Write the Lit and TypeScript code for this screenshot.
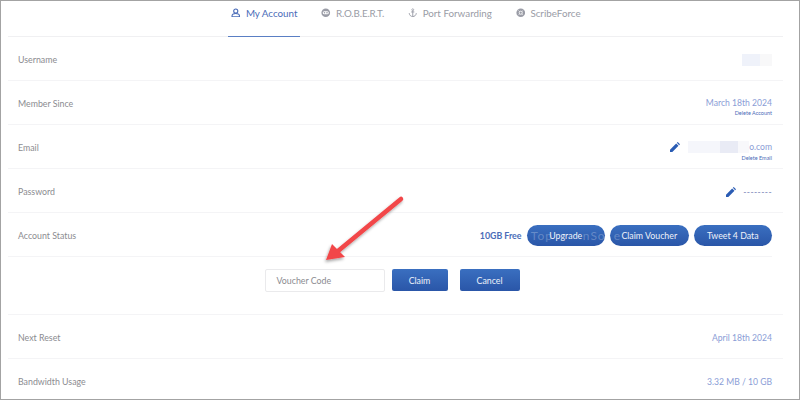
import { LitElement, html, css, svg } from "lit";
import { customElement } from "lit/decorators.js";

const userIcon = svg`<circle cx="6" cy="3.800" r="2.600" fill="none" stroke="currentColor" stroke-width="1.400"/><path d="M1.300 11v-1c0-1.800 1.600-3 4.700-3s4.700 1.200 4.700 3v1z" fill="none" stroke="currentColor" stroke-width="1.400"/>`;
const robotIcon = svg`<circle cx="6" cy="6" r="5.500" fill="currentColor"/><rect x="2.200" y="4.200" width="7.600" height="3.800" rx="1.900" fill="#fff"/><circle cx="4.400" cy="6.100" r="1" fill="currentColor"/><circle cx="7.600" cy="6.100" r="1" fill="currentColor"/>`;
const anchorIcon = svg`<circle cx="6" cy="2.200" r="1.200" fill="none" stroke="currentColor"/><path d="M6 3.400V10.800M4 5h4M1.500 6.500c.3 2.700 2.200 4.300 4.500 4.300s4.200-1.600 4.500-4.300" fill="none" stroke="currentColor" stroke-width="1.200"/>`;
const scribeIcon = svg`<circle cx="6" cy="6" r="5.500" fill="currentColor"/><circle cx="6" cy="6" r="2" fill="none" stroke="#fff" stroke-width="1"/><path d="M3 3l1.800 1.800M9 3L7.200 4.800M3 9l1.800-1.800M9 9L7.200 7.200" stroke="#fff" stroke-width=".7"/>`;
const pencil = svg`<path d="M0 12v-2.800L7.400 1.800l2.800 2.800L2.800 12zM8.200 1l1.100-1 2.700 2.700-1 1.100z" fill="currentColor"/>`;

@customElement("app-root")
export class AppRoot extends LitElement {
  static styles = css`
    :host {
      display: block;
      position: relative;
      width: 800px;
      height: 400px;
      box-sizing: border-box;
      overflow: hidden;
      border: 1px solid #a3a3a3;
      background: #fff;
      font-family: Lato, "Open Sans", sans-serif;
      font-size: 8.800px;
      color: #8b8b90;
    }
    .page {
      padding: 0 16px 0 7px;
    }
    .tabs {
      display: flex;
      justify-content: center;
      gap: 18px;
      height: 36px;
      box-sizing: border-box;
      border-bottom: 1px solid #f0f0f2;
      padding-left: 21px;
      font-size: 9.800px;
      color: #9a9ca6;
    }
    .tab {
      display: flex;
      align-items: center;
      gap: 5px;
      height: 36px;
      box-sizing: border-box;
      padding: 0 3px 12px 3px;
    }
    .tab.tight {
      letter-spacing: -0.15px;
    }
    .tab svg {
      width: 9.500px;
      height: 9.500px;
    }
    .tab.active {
      color: #4a6cb8;
      border-bottom: 1px solid #5a7fc4;
    }
    .row {
      display: flex;
      justify-content: space-between;
      align-items: center;
      height: 44px;
      box-sizing: border-box;
      padding: 2px 11px 0 10px;
      border-bottom: 1px solid #f4f4f6;
    }
    .row.status {
      margin-right: 11px;
      padding-right: 0;
    }
    .value {
      font-size: 8.600px;
      color: #8a9dd6;
      text-align: right;
    }
    .stack {
      display: flex;
      flex-direction: column;
      align-items: flex-end;
      gap: 1px;
      padding-top: 8px;
    }
    .small {
      font-size: 5.500px;
      color: #4a6cb8;
      line-height: 8px;
    }
    .line {
      display: flex;
      align-items: center;
    }
    .edit {
      width: 10px;
      height: 10px;
      margin-right: 8px;
      color: #2a5cb4;
    }
    .dashes {
      color: #7a85b8;
      letter-spacing: 0.4px;
    }
    .dashes .edit {
      margin-right: 7px;
    }
    .blur-a {
      width: 18px;
      height: 12px;
      background: #eff2fa;
    }
    .blur-b {
      width: 12px;
      height: 12px;
      background: #f8f8f9;
    }
    .mail {
      width: 32px;
      height: 12px;
      background: #f5f6fb;
    }
    .mail.mid {
      width: 18px;
      background: #e9ebf5;
    }
    .mail.end {
      width: 11px;
      background: #f8f8fb;
    }
    .actions {
      display: flex;
      align-items: center;
      gap: 5px;
      position: relative;
    }
    .free {
      font-weight: 700;
      color: #4a6cb8;
    }
    .pill {
      width: 78.500px;
      height: 21px;
      border-radius: 11px;
      display: flex;
      align-items: center;
      justify-content: center;
      background: linear-gradient(#3a6fc0, #2a56a8);
      color: #eef2fa;
    }
    .mark {
      position: absolute;
      top: 3px;
      font-size: 12px;
      letter-spacing: 1px;
      color: rgba(255, 255, 255, 0.25);
      white-space: pre;
    }
    .voucher {
      display: flex;
      justify-content: center;
      align-items: center;
      height: 58px;
      box-sizing: border-box;
      padding: 0 7px 11px 0;
      border-bottom: 1px solid #f4f4f6;
    }
    .input {
      width: 120px;
      height: 23px;
      box-sizing: border-box;
      display: flex;
      align-items: center;
      padding-left: 11px;
      border: 1px solid #eaeaec;
      border-radius: 2px;
      margin-right: 7px;
    }
    .btn {
      height: 22px;
      display: flex;
      align-items: center;
      justify-content: center;
      border-radius: 2px;
      background: linear-gradient(#3a6fc0, #2a56a8);
      color: #eef2fa;
    }
    .claim {
      width: 56px;
      margin-right: 12px;
    }
    .cancel {
      width: 60px;
    }
    .arrow {
      position: absolute;
      left: 0;
      top: 0;
      pointer-events: none;
    }
  `;

  render() {
    return html`
      <div class="page">
        <nav class="tabs">
          <div class="tab active"><svg viewBox="0 0 12 12">${userIcon}</svg>My Account</div>
          <div class="tab tight"><svg viewBox="0 0 12 12">${robotIcon}</svg>R.O.B.E.R.T.</div>
          <div class="tab"><svg viewBox="0 0 12 12">${anchorIcon}</svg>Port Forwarding</div>
          <div class="tab"><svg viewBox="0 0 12 12">${scribeIcon}</svg>ScribeForce</div>
        </nav>
        <div class="row">
          <span>Username</span>
          <div class="line"><div class="blur-a"></div><div class="blur-b"></div></div>
        </div>
        <div class="row">
          <span>Member Since</span>
          <div class="stack value">March 18th 2024<span class="small">Delete Account</span></div>
        </div>
        <div class="row">
          <span>Email</span>
          <div class="stack value">
            <div class="line">
              <svg class="edit" viewBox="0 0 12 12">${pencil}</svg>
              <div class="mail"></div><div class="mail mid"></div><div class="mail end"></div>o.com
            </div>
            <span class="small">Delete Email</span>
          </div>
        </div>
        <div class="row">
          <span>Password</span>
          <div class="line value dashes">
            <svg class="edit" viewBox="0 0 12 12">${pencil}</svg>--------
          </div>
        </div>
        <div class="row status">
          <span>Account Status</span>
          <div class="actions">
            <span class="free">10GB Free</span>
            <div class="pill">Upgrade</div>
            <div class="pill">Claim Voucher</div>
            <div class="pill">Tweet 4 Data</div>
            <span class="mark" style="left:51px">Top</span>
            <span class="mark" style="left:103px">nSo  e</span>
          </div>
        </div>
        <div class="voucher">
          <div class="input">Voucher Code</div>
          <div class="btn claim">Claim</div>
          <div class="btn cancel">Cancel</div>
        </div>
        <div class="row">
          <span>Next Reset</span>
          <span class="value">April 18th 2024</span>
        </div>
        <div class="row">
          <span>Bandwidth Usage</span>
          <span class="value">3.32 MB / 10 GB</span>
        </div>
      </div>
      <svg class="arrow" width="798" height="398" viewBox="1 1 798 398">
        <defs>
          <filter id="s" x="-20%" y="-20%" width="150%" height="150%">
            <feDropShadow dx="-1" dy="2" stdDeviation="1.500" flood-color="#000" flood-opacity=".35"/>
          </filter>
        </defs>
        <g filter="url(#s)">
          <path d="M401 199L338 251" stroke="#f24648" stroke-width="4.500" stroke-linecap="round" fill="none"/>
          <path d="M326 260L332 244L345 257z" fill="#f24648"/>
        </g>
      </svg>
    `;
  }
}
